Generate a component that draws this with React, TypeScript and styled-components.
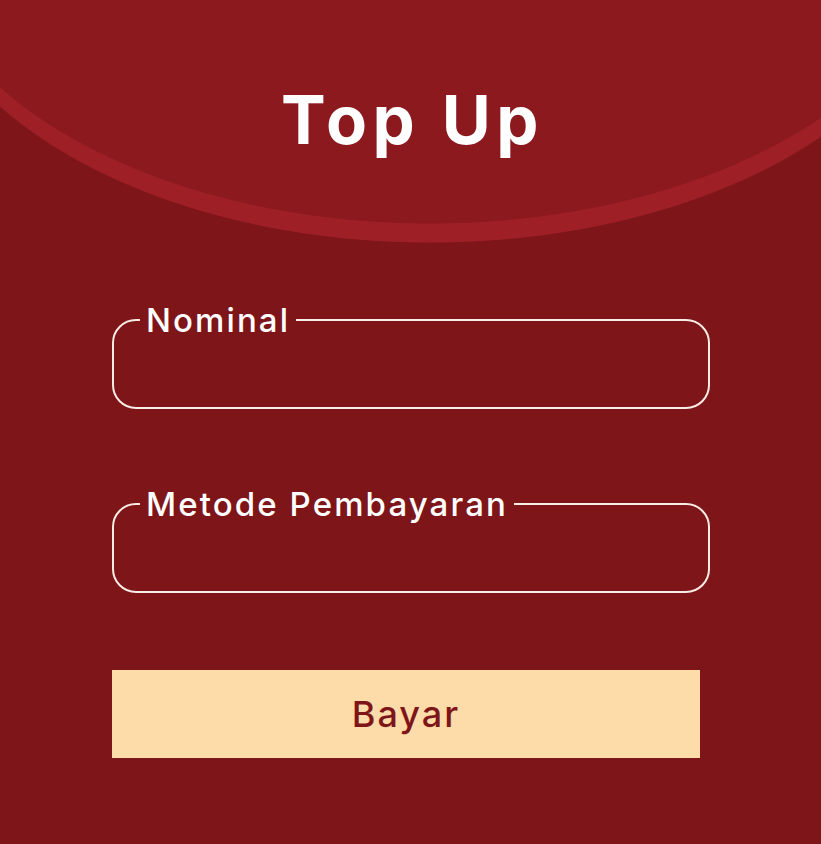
import React from "react";
import styled, { createGlobalStyle } from "styled-components";

const GlobalStyle = createGlobalStyle`
  html, body {
    margin: 0;
    padding: 0;
    background: #7e1519;
  }
  * { box-sizing: border-box; }
`;

const Page = styled.div`
  width: 821px;
  min-height: 844px;
  font-family: Inter, "Open Sans", sans-serif;
  background:
    radial-gradient(ellipse 520px 310px at 430px -86px, #8b191d 99.7%, transparent 100%),
    radial-gradient(ellipse 520px 310px at 430px -67px, #9f1f26 99.7%, transparent 100%),
    #7e1519;
  background-repeat: no-repeat;
  display: flex;
  flex-direction: column;
`;

const Header = styled.header`
  height: 236px;
  display: flex;
  justify-content: center;
  padding-top: 80px;
  padding-left: 4px;
`;

const Title = styled.h1`
  margin: 0;
  color: #ffffff;
  font-size: 67px;
  font-weight: 700;
  letter-spacing: 5.5px;
  line-height: 80px;
  height: 80px;
`;

const Form = styled.form`
  display: flex;
  flex-direction: column;
  padding: 67px 0 0 112px;
  gap: 78px;
`;

const Field = styled.fieldset`
  width: 598px;
  height: 106px;
  margin: 0;
  padding: 0;
  border: 2px solid #f8ece4;
  border-radius: 24px;
`;

const Legend = styled.legend`
  margin-left: 26px;
  padding: 0 6px 0 6px;
  color: #ffffff;
  font-size: 33px;
  font-weight: 500;
  line-height: 34px;
  letter-spacing: 2.1px;
`;

const Submit = styled.button`
  margin-top: -1px;
  width: 588px;
  height: 88px;
  border: none;
  background: #fedcaa;
  color: #7e1519;
  font-family: Inter, "Open Sans", sans-serif;
  font-size: 36px;
  font-weight: 500;
  letter-spacing: 2px;
  cursor: pointer;
`;

export default function App() {
  return (
    <>
      <GlobalStyle />
      <Page>
        <Header>
          <Title>Top Up</Title>
        </Header>
        <Form onSubmit={(e) => e.preventDefault()}>
          <Field>
            <Legend>Nominal</Legend>
          </Field>
          <Field>
            <Legend>Metode Pembayaran</Legend>
          </Field>
          <Submit type="submit">Bayar</Submit>
        </Form>
      </Page>
    </>
  );
}
